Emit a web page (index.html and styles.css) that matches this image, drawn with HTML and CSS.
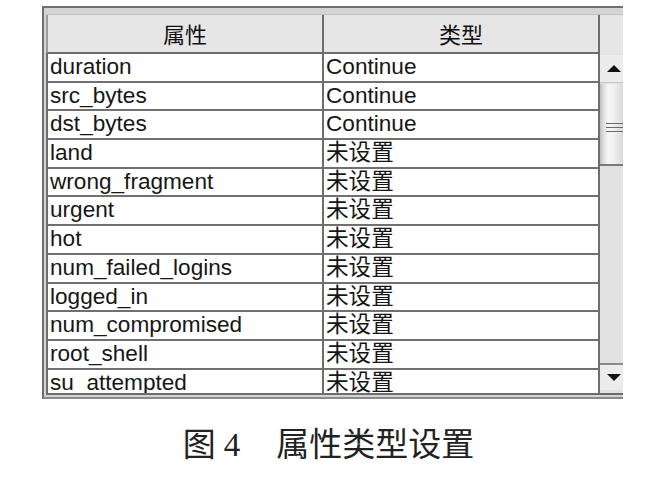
FILE: index.html
```html
<!DOCTYPE html>
<html lang="zh-CN">
<head>
<meta charset="utf-8">
<title>属性类型设置</title>
<link rel="stylesheet" href="styles.css">
</head>
<body>
<div class="panel">
  <div class="head">
    <div class="hcell c1">属性</div>
    <div class="hcell c2">类型</div>
    <div class="hfill"></div>
  </div>
  <div class="body">
    <div class="rows">
      <div class="row"><div class="cell c1">duration</div><div class="cell c2">Continue</div></div>
      <div class="row"><div class="cell c1">src_bytes</div><div class="cell c2">Continue</div></div>
      <div class="row"><div class="cell c1">dst_bytes</div><div class="cell c2">Continue</div></div>
      <div class="row"><div class="cell c1">land</div><div class="cell c2">未设置</div></div>
      <div class="row"><div class="cell c1">wrong_fragment</div><div class="cell c2">未设置</div></div>
      <div class="row"><div class="cell c1">urgent</div><div class="cell c2">未设置</div></div>
      <div class="row"><div class="cell c1">hot</div><div class="cell c2">未设置</div></div>
      <div class="row"><div class="cell c1">num_failed_logins</div><div class="cell c2">未设置</div></div>
      <div class="row"><div class="cell c1">logged_in</div><div class="cell c2">未设置</div></div>
      <div class="row"><div class="cell c1">num_compromised</div><div class="cell c2">未设置</div></div>
      <div class="row"><div class="cell c1">root_shell</div><div class="cell c2">未设置</div></div>
      <div class="row"><div class="cell c1">su_attempted</div><div class="cell c2">未设置</div></div>
    </div>
    <div class="sb">
      <div class="sb-btn up"><svg width="14" height="7" viewBox="0 0 14 7"><polygon points="7,0 14,7 0,7" fill="#111"/></svg></div>
      <div class="sb-thumb"><span class="grip"></span><span class="grip"></span><span class="grip"></span></div>
      <div class="sb-track"></div>
      <div class="sb-btn down"><svg width="14" height="7" viewBox="0 0 14 7"><polygon points="0,0 14,0 7,7" fill="#111"/></svg></div>
    </div>
  </div>
</div>
<div class="caption"><span class="fig">图</span><span class="num">4</span><span class="title">属性类型设置</span></div>
</body>
</html>
```

FILE: styles.css
```css
html, body {
  margin: 0;
  background: #fff;
}
body {
  font-family: "Liberation Sans", Arial, "Noto Sans CJK SC", sans-serif;
  color: #161616;
}
.panel {
  box-sizing: border-box;
  width: 581px;
  margin: 6px 0 0 42px;
  border-top: 2px solid #6f6f6f;
  border-left: 2px solid #6f6f6f;
  border-bottom: 2px solid #8a8a8a;
  padding: 6px 0 2px 2px;
  background: #d4d4d4;
  overflow: hidden;
}
.head {
  display: flex;
  height: 40px;
  background: #e6e6e6;
  border-top: 1px solid #c4c4c4;
  box-sizing: border-box;
}
.hcell {
  box-sizing: border-box;
  border-bottom: 2px solid #6d6d6d;
  display: flex;
  align-items: center;
  justify-content: center;
  font-size: 22px;
  font-family: "Noto Sans CJK SC", sans-serif;
  padding-bottom: 2px;
  color: #111;
}
.c1 {
  width: 276px;
  border-left: 2px solid #6d6d6d;
  box-sizing: border-box;
}
.c2 {
  width: 278px;
  border-left: 2px solid #6d6d6d;
  border-right: 2px solid #6d6d6d;
  box-sizing: border-box;
}
.hcell.c1 {
  border-left-color: #9a9a9a;
}
.hfill {
  width: 23px;
  background: #e6e6e6;
}
.body {
  display: flex;
  height: 341px;
  border-bottom: 2px solid #6d6d6d;
  box-sizing: border-box;
  background: #fff;
}
.rows {
  height: 339px;
  overflow: hidden;
  background: #fff;
}
.row {
  display: flex;
  height: 28.7px;
}
.cell {
  box-sizing: border-box;
  height: 28.7px;
  border-bottom: 2px solid #707070;
  padding-left: 2px;
  font-size: 22.6px;
  line-height: 26.7px;
  white-space: nowrap;
  overflow: hidden;
}
.sb {
  width: 23px;
  height: 339px;
  display: flex;
  flex-direction: column;
  background: #e2e2e2;
  overflow: hidden;
}
.sb-btn {
  height: 28px;
  flex: none;
  background: #ececec;
  display: flex;
  align-items: center;
  padding-left: 7px;
  box-sizing: border-box;
}
.sb-btn.up {
  margin-top: 1px;
  border-bottom: 1px solid #c8c8c8;
}
.sb-btn.down {
  border-top: 2px solid #8a8a8a;
  height: 27px;
  margin-bottom: 3px;
}
.sb-thumb {
  height: 82px;
  flex: none;
  margin-top: 1px;
  box-sizing: border-box;
  border-bottom: 2px solid #7a7a7a;
  background: linear-gradient(to right, #bdbdbd 0px, #dcdcdc 3px, #f6f6f6 8px, #f0f0f0 14px, #d8d8d8 23px);
  display: flex;
  flex-direction: column;
  justify-content: center;
  gap: 3px;
  padding-left: 6px;
  padding-top: 6px;
}
.grip {
  display: block;
  height: 1px;
  background: #6a6a6a;
}
.sb-track {
  flex: 1;
  background: #e2e2e2;
}
.caption {
  display: flex;
  justify-content: center;
  align-items: baseline;
  margin-top: 23px;
  padding-right: 3px;
  font-size: 33px;
  line-height: 40px;
  color: #222;
  font-family: "Liberation Serif", "Noto Sans CJK SC", serif;
}
.fig, .title {
  font-family: "Noto Sans CJK SC", serif;
}
.num {
  margin: 0 36px 0 8px;
}
```
